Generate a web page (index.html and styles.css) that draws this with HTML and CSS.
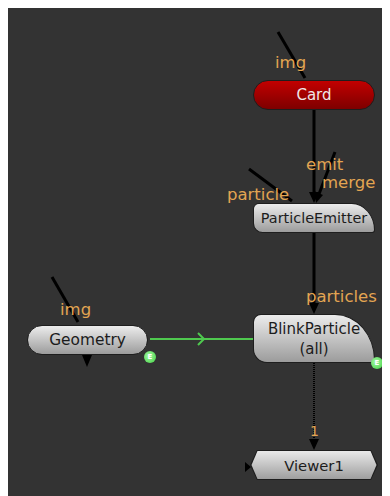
FILE: index.html
```html
<!DOCTYPE html>
<html lang="en">
<head>
    <meta charset="UTF-8">
    <meta name="viewport" content="width=device-width, initial-scale=1.0">
    <link rel="stylesheet" href="styles.css">
    <title>Node Graph</title>
</head>
<body>
    <div class="graph">
        <svg class="edges" width="400" height="500">
            <g stroke="#000" stroke-width="3" fill="none">
                <line x1="270" y1="24" x2="297" y2="70"/>
                <line x1="306" y1="102" x2="306" y2="186"/>
                <line x1="327" y1="144" x2="311" y2="186"/>
                <line x1="241" y1="161" x2="284" y2="193"/>
                <line x1="306" y1="225" x2="306" y2="297"/>
                <line x1="44" y1="269" x2="70" y2="314"/>
            </g>
            <line x1="306" y1="355" x2="306" y2="432" stroke="#000" stroke-width="2" stroke-dasharray="1 1"/>
            <g fill="#000">
                <polygon points="301,184 311,184 306,195"/>
                <polygon points="306,183 315,187 308,195"/>
                <polygon points="301,295 311,295 306,306"/>
                <polygon points="301,431 311,431 306,442"/>
                <polygon points="74,347 84,347 79,359"/>
                <polygon points="237,454 243,459 237,464"/>
            </g>
            <g stroke="#4fc94f" stroke-width="2" fill="none">
                <line x1="142" y1="331" x2="245" y2="331"/>
                <polyline points="190,325 196,331 190,337"/>
            </g>
        </svg>

        <span class="label" style="left:267px;top:45px">img</span>
        <div class="node node-card" style="left:245px;top:72px">Card</div>

        <span class="label" style="left:298px;top:147px">emit</span>
        <span class="label" style="left:314px;top:165px">merge</span>
        <span class="label" style="left:219px;top:177px">particle</span>
        <div class="node node-blink node-small" style="left:245px;top:195px">ParticleEmitter</div>

        <span class="label" style="left:298px;top:279px">particles</span>
        <div class="node node-blink node-tall" style="left:245px;top:306px">BlinkParticle<br>(all)</div>
        <span class="dot" style="left:363px;top:349px">E</span>

        <span class="label" style="left:52px;top:292px">img</span>
        <div class="node node-pill" style="left:19px;top:317px">Geometry</div>
        <span class="dot" style="left:136px;top:343px">E</span>

        <span class="label label-small" style="left:302px;top:414px">1</span>
        <div class="node-viewer" style="left:242px;top:442px">
            <div class="viewer-face">Viewer1</div>
        </div>
    </div>
</body>
</html>
```

FILE: styles.css
```css
html {
    overflow: hidden;
}

body {
    background: #fff;
    font-family: 'DejaVu Sans', Verdana, sans-serif;
}

.graph {
    position: relative;
    height: calc(100vh - 8px);
    margin-right: -8px;
    background: #333333;
    overflow: hidden;
}

.edges {
    position: absolute;
    left: 0;
    top: 0;
}

.label {
    position: absolute;
    color: #e3a552;
    font-size: 16.5px;
    line-height: 19px;
    white-space: nowrap;
}

.label-small {
    font-size: 14px;
}

.node {
    position: absolute;
    width: 122px;
    height: 30px;
    box-sizing: border-box;
    border: 1px solid #1e1e1e;
    display: flex;
    align-items: center;
    justify-content: center;
    text-align: center;
    font-size: 15px;
    line-height: 20px;
    color: #1c1c1c;
    background: linear-gradient(#ececec, #9c9c9c);
}

.node-card {
    border-radius: 15px;
    color: #f0e6e6;
    background: linear-gradient(#c20000, #7e0000);
}

.node-pill {
    width: 121px;
    border-radius: 15px;
    font-size: 15.4px;
}

.node-blink {
    border-radius: 6px 24px 3px 10px / 6px 28px 3px 10px;
}

.node-small {
    font-size: 14.4px;
}

.node-tall {
    height: 49px;
    border-radius: 8px 40px 3px 14px / 8px 46px 3px 14px;
}

.dot {
    position: absolute;
    width: 12px;
    height: 12px;
    border-radius: 50%;
    background: radial-gradient(circle at 40% 40%, #a4f7a4, #3fd13f);
    color: #fff;
    font-size: 7px;
    line-height: 12px;
    text-align: center;
    font-weight: bold;
}

.node-viewer {
    position: absolute;
    width: 128px;
    height: 30px;
    background: #1e1e1e;
    clip-path: polygon(0 50%, 7px 0, calc(100% - 7px) 0, 100% 50%, calc(100% - 7px) 100%, 7px 100%);
}

.viewer-face {
    height: 100%;
    display: flex;
    align-items: center;
    justify-content: center;
    font-size: 14.8px;
    color: #1c1c1c;
    background: linear-gradient(#ececec, #9c9c9c);
    clip-path: polygon(1.5px 50%, 7.5px 1px, calc(100% - 7.5px) 1px, calc(100% - 1.5px) 50%, calc(100% - 7.5px) calc(100% - 1px), 7.5px calc(100% - 1px));
}
```
